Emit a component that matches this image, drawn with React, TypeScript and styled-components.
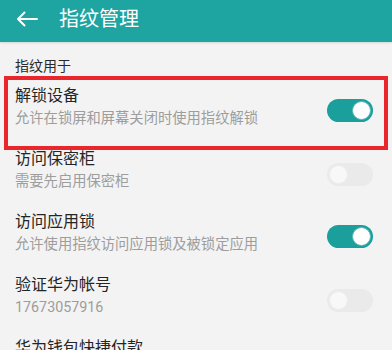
import React from "react";
import styled, { createGlobalStyle } from "styled-components";

const GlobalStyle = createGlobalStyle`
  html, body {
    margin: 0;
    padding: 0;
    background: #f3f3f3;
    font-family: Roboto, "Noto Sans CJK SC", sans-serif;
  }
  * { box-sizing: border-box; }
`;

const Screen = styled.div`
  width: 392px;
  height: 350px;
  overflow: hidden;
  background: #f3f3f3;
  position: relative;
`;

const Header = styled.header`
  height: 42px;
  background: #1ea4a1;
  display: flex;
  align-items: center;
  padding-left: 16px;
  gap: 21px;
  box-shadow: 0 1px 2px rgba(0, 0, 0, 0.12);
`;

const Title = styled.h1`
  margin: 0;
  font-size: 20px;
  font-weight: 400;
  color: #ffffff;
  line-height: 24px;
  margin-top: -4px;
`;

const SectionLabel = styled.div`
  padding: 15px 0 5px 15px;
  font-size: 14px;
  line-height: 18px;
  color: #2a2a2a;
`;

const List = styled.div`
  position: relative;
  display: flex;
  flex-direction: column;
`;

const Row = styled.div`
  height: 63px;
  flex-shrink: 0;
  display: flex;
  align-items: center;
  justify-content: space-between;
  padding: 0 19px 0 15px;
`;

const Texts = styled.div`
  display: flex;
  flex-direction: column;
  gap: 3px;
  margin-top: -10px;
`;

const RowTitle = styled.div`
  font-size: 16px;
  line-height: 20px;
  color: #252525;
`;

const RowSub = styled.div`
  font-size: 14.3px;
  line-height: 18px;
  color: #9d9d9d;
  white-space: pre;
`;

const Track = styled.div<{ $on: boolean }>`
  width: 46px;
  height: 23px;
  border-radius: 12px;
  background: ${(p) => (p.$on ? "#1a9f9c" : "#eaeaea")};
  display: flex;
  align-items: center;
  justify-content: ${(p) => (p.$on ? "flex-end" : "flex-start")};
  padding: 0 2px;
  margin-top: ${(p) => (p.$on ? "-2px" : "0")};
`;

const Knob = styled.div<{ $on: boolean }>`
  width: 19px;
  height: 19px;
  border-radius: 50%;
  background: ${(p) => (p.$on ? "#ffffff" : "#f8f8f8")};
  border: 1px solid ${(p) => (p.$on ? "#5bbab7" : "#ededed")};
`;

const Highlight = styled.div`
  position: absolute;
  left: 4px;
  top: -4px;
  width: 384px;
  height: 74px;
  border: 4px solid #e8262c;
  pointer-events: none;
`;

const BackArrow = () => (
  <svg width="22" height="16" viewBox="0 0 22 16" fill="none" style={{ marginTop: -4 }}>
    <path d="M21 8H2M8.5 1.5L2 8l6.5 6.5" stroke="#fff" strokeWidth="2" strokeLinecap="round" strokeLinejoin="round" />
  </svg>
);

const Toggle = ({ on }: { on: boolean }) => (
  <Track $on={on}>
    <Knob $on={on} />
  </Track>
);

const rows = [
  { title: "解锁设备", sub: "允许在锁屏和屏幕关闭时使用指纹解锁", on: true },
  { title: "访问保密柜", sub: "需要先启用保密柜", on: false },
  { title: "访问应用锁", sub: "允许使用指纹访问应用锁及被锁定应用", on: true },
  { title: "验证华为帐号", sub: "17673057916", on: false },
  { title: "华为钱包快捷付款", sub: " ", on: false },
];

export default function App() {
  return (
    <>
      <GlobalStyle />
      <Screen>
        <Header>
          <BackArrow />
          <Title>指纹管理</Title>
        </Header>
        <SectionLabel>指纹用于</SectionLabel>
        <List>
          {rows.map((r) => (
            <Row key={r.title}>
              <Texts>
                <RowTitle>{r.title}</RowTitle>
                <RowSub>{r.sub}</RowSub>
              </Texts>
              <Toggle on={r.on} />
            </Row>
          ))}
          <Highlight />
        </List>
      </Screen>
    </>
  );
}
